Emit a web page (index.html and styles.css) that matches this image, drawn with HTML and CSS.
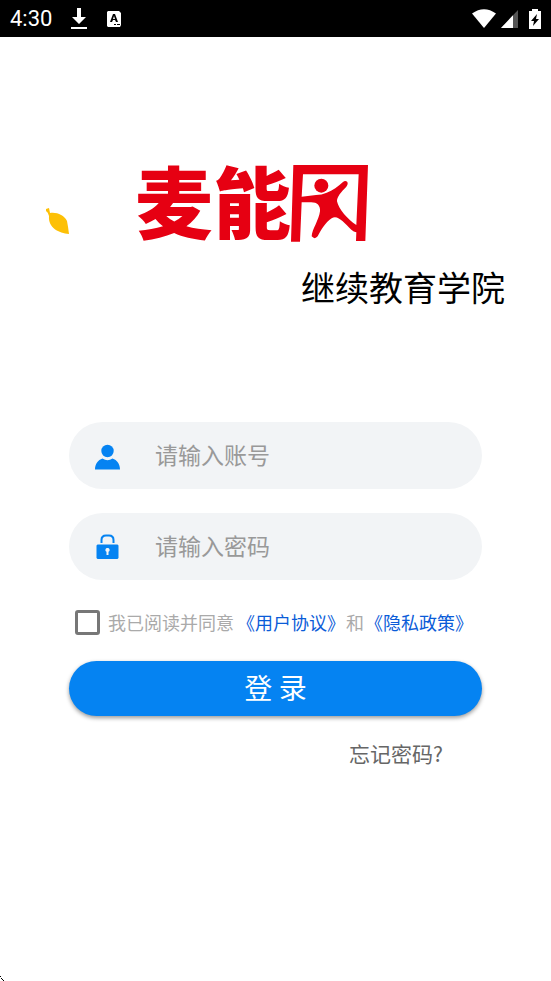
FILE: index.html
```html
<!DOCTYPE html>
<html lang="zh-CN">
<head>
<meta charset="utf-8">
<meta name="viewport" content="width=device-width, initial-scale=1">
<title>继续教育学院</title>
<link rel="stylesheet" href="styles.css">
</head>
<body>
<header class="status">
  <div class="status-group">
    <span class="clock">4:30</span>
    <svg width="16" height="22" viewBox="0 0 16 22" aria-hidden="true"><path d="M6 0h4v9h5l-7 7-7-7h5zM0 19h16v2H0z"/></svg>
    <svg width="16" height="16" viewBox="0 0 16 16" aria-hidden="true"><path fill-rule="evenodd" d="M2 0h11l2 2v12l-1 2H2l-1-1V1zM7 3 4 11h2l1-2h2l1 2h2L9 3zm1 2 1 3H7zM8 13v1h2v-1zm3 0v1h3v-1z"/></svg>
  </div>
  <div class="status-group icons">
    <svg width="24" height="19" viewBox="0 0 24 19" aria-hidden="true"><path d="M0 4.500Q12-4 24 4.500L12 19z"/></svg>
    <svg class="signal" width="17" height="18" viewBox="0 0 17 18" aria-hidden="true"><path class="dim" d="M17 0v18H0z"/><path d="M12 5.300V18H0z"/></svg>
    <svg width="12" height="20" viewBox="0 0 12 20" aria-hidden="true"><path fill-rule="evenodd" d="M3 0h6v2h3v18H0V2h3zM8 5 2 12h3l-1 5 6-7H7z"/></svg>
  </div>
</header>
<main>
  <section class="brand">
    <div class="logo-row">
      <svg class="leaf" width="24" height="27" viewBox="0 0 24 27" aria-hidden="true"><path d="M0 1 3 0 4 5C11 4 18 7 21 13Q22 18 23 26C13 25 2 20 3 8Q2 4 0 3z"/></svg>
      <h1 class="logo"><span>麦能</span><svg class="emblem" width="77" height="77" viewBox="495 42 231 231" role="img" aria-label="网"><path fill-rule="evenodd" d="M502 42H726L718 270H690L691 244Q683 243 676 236C654 215 635 190 617 202C597 216 586 235 575 256Q566 267 557 256C558 235 579 207 582 181C584 163 572 153 553 154L527 154L522 272H495ZM531 70 527 137 570 132Q587 132 602 125C620 119 637 106 650 94C661 84 671 96 661 107C646 122 632 138 633 151C638 174 665 206 691 222L698 70Z"/><circle cx="586" cy="104" r="21"/></svg></h1>
    </div>
    <p class="school">继续教育学院</p>
  </section>
  <form class="login">
    <label class="field">
      <svg width="26" height="30" viewBox="0 0 26 30" aria-hidden="true"><circle cx="12.500" cy="10" r="6.200"/><path d="M0 28.500C0 23 3 19 7.500 17.500Q12.500 21 17.500 17.500C22 19 25 23 25 28.500z"/></svg>
      <input type="text" placeholder="请输入账号" aria-label="账号">
    </label>
    <label class="field">
      <svg width="26" height="30" viewBox="0 0 26 30" aria-hidden="true"><path class="shackle" d="M6.500 11V8Q6.500 3.500 11 3.500H14Q18.500 3.500 18.500 8V11"/><path fill-rule="evenodd" d="M2.500 12.500H22.500L23.500 13.500V26L22.500 27H2.500L1.500 26V13.500zM12.500 16a2 2 0 0 0-1 3.800V23h2v-3.200a2 2 0 0 0-1-3.800z"/></svg>
      <input type="password" placeholder="请输入密码" aria-label="密码">
    </label>
    <div class="consent">
      <input type="checkbox" id="agree">
      <span><label for="agree">我已阅读并同意</label><a href="#terms">《用户协议》</a>和<a href="#privacy">《隐私政策》</a></span>
    </div>
    <button class="submit" type="submit">登 录</button>
    <a class="forgot" href="#forgot">忘记密码?</a>
  </form>
</main>
<svg class="corner" width="4" height="5" viewBox="0 0 4 5" aria-hidden="true"><path d="M0 0h1v1H0zM1 2h1v1H1zM2 3h1v1H2zM3 4h1v1H3z"/></svg>
</body>
</html>
```

FILE: styles.css
```css
* { box-sizing: border-box; }

body {
  margin: 0;
  background: #fff;
  color: #000;
  font-family: "Noto Sans CJK SC", sans-serif;
}

svg { display: block; flex: none; }

.status {
  display: flex;
  align-items: center;
  justify-content: space-between;
  height: 37px;
  padding: 0 10px;
  background: #000;
  color: #fff;
}

.status svg { fill: #fff; }
.status-group { display: flex; align-items: center; gap: 19px; }
.status-group.icons { gap: 5px; }
.icons .signal { margin-right: 6px; }
.signal .dim { fill: #555; }
.clock { font: 22px/24px Roboto, sans-serif; }

.brand { padding: 126px 46px 0; }
.logo-row { display: flex; align-items: center; gap: 65px; }
.leaf { fill: #fdc006; margin-top: 36px; }

.logo {
  display: flex;
  align-items: center;
  height: 80px;
  margin: 0;
  color: #e60012;
  font-size: 78px;
  font-weight: 900;
  line-height: 80px;
}

.logo span { padding-bottom: 8px; }
.emblem { fill: #e60012; }

.school {
  margin: 20px 0 0;
  font-size: 34px;
  line-height: 48px;
  text-align: right;
}

.login {
  display: flex;
  flex-direction: column;
  padding: 111px 69px 0;
}

.field {
  display: flex;
  align-items: center;
  gap: 34px;
  height: 67px;
  margin-bottom: 24px;
  padding: 0 26px;
  border-radius: 34px;
  background: #f2f4f6;
}

.field svg { fill: #0583f2; }
.field .shackle { fill: none; stroke: #0583f2; stroke-width: 2; }

.field input {
  flex: 1;
  min-width: 0;
  padding: 0 0 4px;
  border: 0;
  outline: 0;
  background: none;
  color: #333;
  font: 23px/34px "Noto Sans CJK SC", sans-serif;
}

.field input::placeholder { color: #999; opacity: 1; }

.consent {
  display: flex;
  align-items: center;
  gap: 8px;
  padding: 0 6px;
  color: #aaa;
  font-size: 18px;
  line-height: 37px;
  white-space: nowrap;
}

.consent input {
  appearance: none;
  flex: none;
  width: 25px;
  height: 25px;
  margin: 0;
  border: 3px solid #777;
  border-radius: 3px;
}

.consent input:checked { background: #0583f2; }
.consent label { padding-right: 2px; }
.consent a { padding: 0 1px; color: #0b5cd8; text-decoration: none; }

.submit {
  height: 55px;
  margin-top: 20px;
  padding: 0 0 4px;
  border: 0;
  border-radius: 28px;
  background: #0583f2;
  box-shadow: 0 2px 4px rgba(0, 0, 0, 0.4);
  color: #fff;
  font: 28px/40px "Noto Sans CJK SC", sans-serif;
}

.forgot {
  align-self: flex-end;
  margin: 21px 39px 0 0;
  color: #666;
  font-size: 21px;
  line-height: 32px;
  text-decoration: none;
}

.corner { position: fixed; left: 0; bottom: 0; }
```
